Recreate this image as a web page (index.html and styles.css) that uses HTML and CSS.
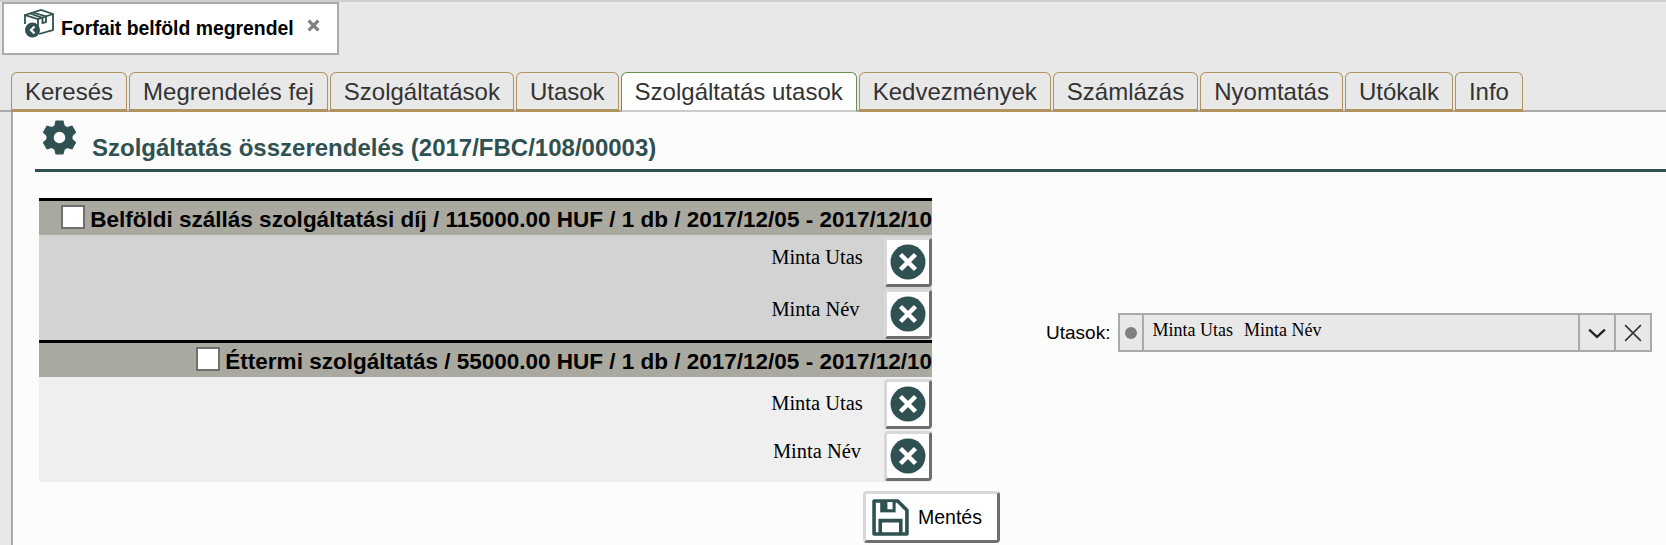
FILE: index.html
```html
<!DOCTYPE html>
<html lang="en">
<head>
  <meta charset="UTF-8">
  <meta name="viewport" content="width=device-width, initial-scale=1.0">
  <title>Forfait belföld megrendel</title>
  <link rel="stylesheet" href="styles.css">
</head>
<body>
  <!-- Window tab -->
  <div class="window-bar">
    <div class="window-tab">
      <svg class="box-icon" viewBox="0 0 30 29" fill="none" stroke="#2f5151" stroke-width="1.8">
        <path d="M1 6 L17 1 L29 5 L14 10 Z"/>
        <path d="M1 6 V15"/>
        <path d="M14 10 V18"/>
        <path d="M29 5 V21 L15 25"/>
        <path d="M9 3.500 L22 7.500 V13 L18.500 14 V9 L6 4.500"/>
        <circle cx="8.500" cy="21" r="7.500" fill="#2f5151" stroke="none"/>
        <path d="M10.500 17.500 L7 21 L10.500 24.500" stroke="#fff" stroke-width="2.200"/>
      </svg>
      <span class="window-title">Forfait belföld megrendel</span>
      <svg class="window-close" viewBox="0 0 12 12" fill="none" stroke="#808080" stroke-width="3"><path d="M1.500 1.500 L10.500 10.500 M10.500 1.500 L1.500 10.500"/></svg>
    </div>
  </div>

  <!-- Tabs -->
  <nav class="tabs">
    <a href="#" class="tab">Keresés</a>
    <a href="#" class="tab">Megrendelés fej</a>
    <a href="#" class="tab">Szolgáltatások</a>
    <a href="#" class="tab">Utasok</a>
    <a href="#" class="tab active">Szolgáltatás utasok</a>
    <a href="#" class="tab">Kedvezmények</a>
    <a href="#" class="tab">Számlázás</a>
    <a href="#" class="tab">Nyomtatás</a>
    <a href="#" class="tab">Utókalk</a>
    <a href="#" class="tab">Info</a>
  </nav>

  <main class="panel">
    <div class="section-head">
      <svg class="gear-icon" viewBox="0 0 24 24" fill="#2f5151">
        <circle cx="12" cy="12" r="6.500" fill="none" stroke="#2f5151" stroke-width="5"/>
        <path d="M8.400 4 L9.300 .3 H14.700 L15.600 4 Z"/>
        <path d="M8.400 4 L9.300 .3 H14.700 L15.600 4 Z" transform="rotate(60 12 12)"/>
        <path d="M8.400 4 L9.300 .3 H14.700 L15.600 4 Z" transform="rotate(120 12 12)"/>
        <path d="M8.400 4 L9.300 .3 H14.700 L15.600 4 Z" transform="rotate(180 12 12)"/>
        <path d="M8.400 4 L9.300 .3 H14.700 L15.600 4 Z" transform="rotate(240 12 12)"/>
        <path d="M8.400 4 L9.300 .3 H14.700 L15.600 4 Z" transform="rotate(300 12 12)"/>
      </svg>
      <h2>Szolgáltatás összerendelés (2017/FBC/108/00003)</h2>
    </div>

    <div class="content">
      <div class="services">
        <div class="service dark">
          <div class="service-head">
            <span class="checkbox"></span>
            <span class="service-title">Belföldi szállás szolgáltatási díj / 115000.00 HUF / 1 db / 2017/12/05 - 2017/12/10</span>
          </div>
          <div class="passenger">
            <span class="name raised">Minta Utas</span>
            <button class="remove-btn"><svg viewBox="0 0 36 36"><circle cx="18" cy="18" r="17.500" fill="#2f5151"/><path d="M10.500 10.500 L25.500 25.500 M25.500 10.500 L10.500 25.500" stroke="#fff" stroke-width="4.500"/></svg></button>
          </div>
          <div class="passenger">
            <span class="name raised shifted">Minta Név</span>
            <button class="remove-btn"><svg viewBox="0 0 36 36"><circle cx="18" cy="18" r="17.500" fill="#2f5151"/><path d="M10.500 10.500 L25.500 25.500 M25.500 10.500 L10.500 25.500" stroke="#fff" stroke-width="4.500"/></svg></button>
          </div>
        </div>
        <div class="service light">
          <div class="service-head">
            <span class="checkbox"></span>
            <span class="service-title">Éttermi szolgáltatás / 55000.00 HUF / 1 db / 2017/12/05 - 2017/12/10</span>
          </div>
          <div class="passenger">
            <span class="name">Minta Utas</span>
            <button class="remove-btn"><svg viewBox="0 0 36 36"><circle cx="18" cy="18" r="17.500" fill="#2f5151"/><path d="M10.500 10.500 L25.500 25.500 M25.500 10.500 L10.500 25.500" stroke="#fff" stroke-width="4.500"/></svg></button>
          </div>
          <div class="passenger">
            <span class="name raised">Minta Név</span>
            <button class="remove-btn"><svg viewBox="0 0 36 36"><circle cx="18" cy="18" r="17.500" fill="#2f5151"/><path d="M10.500 10.500 L25.500 25.500 M25.500 10.500 L10.500 25.500" stroke="#fff" stroke-width="4.500"/></svg></button>
          </div>
        </div>
        <button class="save-btn">
          <svg viewBox="0 0 36 36" fill="none" stroke="#2f5151" stroke-width="3.500">
            <path d="M2 2 H25 L34 11 V34 H2 Z" stroke-linejoin="round"/>
            <path d="M8 2 H23 V13 H8 Z" fill="#2f5151" stroke="none"/>
            <rect x="15" y="3" width="5" height="7" fill="#fff" stroke="none"/>
            <path d="M8 34 V21 H28 V34"/>
          </svg>
          <span>Mentés</span>
        </button>
      </div>

      <div class="passenger-field">
        <label>Utasok:</label>
        <div class="select-box">
          <span class="select-dot"><i></i></span>
          <span class="select-value"><span>Minta Utas</span><span>Minta Név</span></span>
          <span class="select-btn">
            <svg viewBox="0 0 16 16" fill="none" stroke="#222" stroke-width="2"><path d="M1 5 L8 11.500 L15 5"/></svg>
          </span>
          <span class="select-btn">
            <svg viewBox="0 0 16 16" fill="none" stroke="#333" stroke-width="1.400"><path d="M1 1 L15 15 M15 1 L1 15"/></svg>
          </span>
        </div>
      </div>
    </div>
  </main>
</body>
</html>
```

FILE: styles.css
```css
/* General Reset */
* {
  margin: 0;
  padding: 0;
  box-sizing: border-box;
}

body {
  background-color: #e8e8e8;
  border-top: 2px solid #cfcfcf;
  font-family: "Liberation Sans", Arial, sans-serif;
  height: 545px;
  overflow: hidden;
}

/* Window tab */
.window-bar {
  padding-left: 2px;
}

.window-tab {
  display: flex;
  align-items: center;
  width: 337px;
  height: 53px;
  padding-left: 20px;
  background-color: #fff;
  border: 2px solid #aaa;
}

.box-icon {
  width: 30px;
  height: 29px;
  margin-top: -10px;
}

.window-title {
  margin-left: 7px;
  font-size: 19.4px;
  font-weight: bold;
  color: #000;
}

.window-close {
  width: 13px;
  height: 13px;
  margin-left: 13px;
  margin-top: -7px;
}

/* Tabs */
.tabs {
  display: flex;
  gap: 2px;
  height: 40px;
  margin-top: 17px;
  padding-left: 11px;
  border-bottom: 2px solid #aaa;
}

.tab {
  height: 40px;
  padding: 0 13px;
  line-height: 37px;
  font-size: 24px;
  color: #333;
  text-decoration: none;
  background-color: #e8e8e8;
  border: 1px solid #b0935f;
  border-bottom-width: 3px;
  border-radius: 6px 6px 0 0;
}

.tab.active {
  background-color: #fff;
  border-color: #6a8f4f;
  border-bottom: 2px solid #ccc;
}

/* Main panel */
.panel {
  height: 433px;
  margin-left: 11px;
  padding: 0 0 0 22px;
  background-color: #fcfcfc;
  border-left: 2px solid #aaa;
}

.section-head {
  display: flex;
  align-items: flex-end;
  height: 60px;
  padding: 0 0 7px 7px;
  border-bottom: 3px solid #2f5151;
}

.gear-icon {
  width: 35px;
  height: 35px;
  margin-bottom: 7px;
}

.section-head h2 {
  margin-left: 15px;
  font-size: 24px;
  color: #2f5151;
}

.content {
  display: flex;
  align-items: flex-start;
  padding: 26px 0 0 4px;
}

/* Services */
.services {
  width: 961px;
}

.service {
  width: 893px;
  border-top: 3px solid #000;
}

.service.dark {
  background-color: #d3d3d3;
  padding-bottom: 1px;
}

.service.light {
  background-color: #efefef;
  padding-bottom: 1px;
}

.service-head {
  display: flex;
  align-items: center;
  justify-content: flex-end;
  gap: 5px;
  height: 34px;
  font-size: 22.5px;
  font-weight: bold;
  white-space: nowrap;
  color: #000;
  background-color: #aaa9a0;
}

.service-title {
  margin-top: 4px;
}

.checkbox {
  width: 24px;
  height: 24px;
  margin-top: -2px;
  background-color: #fff;
  border: 2px solid #707070;
}

.passenger {
  display: flex;
  align-items: center;
  justify-content: flex-end;
  height: 52px;
  padding-top: 1px;
}

.name {
  width: 114px;
  margin-right: 10px;
  text-align: center;
  font-family: "Liberation Serif", "Times New Roman", serif;
  font-size: 20.5px;
  color: #000;
}

.name.raised {
  margin-bottom: 9px;
}

.name.shifted {
  padding-right: 3px;
}

.remove-btn {
  display: flex;
  align-items: center;
  justify-content: center;
  width: 48px;
  height: 50px;
  background-color: #fff;
  border: 3px solid #d8d8d8;
  border-right-color: #6e6e6e;
  border-bottom-color: #6e6e6e;
  border-radius: 4px;
}

.remove-btn svg {
  width: 36px;
  height: 36px;
}

.save-btn {
  display: flex;
  align-items: center;
  width: 137px;
  height: 52px;
  margin: 9px 0 0 824px;
  padding-left: 6px;
  font-family: "Liberation Sans", Arial, sans-serif;
  font-size: 19.5px;
  color: #000;
  background-color: #fff;
  border: 3px solid #d8d8d8;
  border-right-color: #6e6e6e;
  border-bottom-color: #6e6e6e;
  border-radius: 4px;
}

.save-btn svg {
  width: 37px;
  height: 37px;
  margin-right: 9px;
}

/* Passenger select */
.passenger-field {
  display: flex;
  align-items: center;
  margin: 115px 0 0 46px;
}

.passenger-field label {
  margin-right: 8px;
  font-size: 19px;
  color: #000;
}

.select-box {
  display: flex;
  align-items: stretch;
  width: 534px;
  height: 39px;
  background-color: #e8e8e8;
  border: 2px solid #aaa;
}

.select-dot {
  display: flex;
  align-items: center;
  justify-content: center;
  width: 24px;
  border-right: 2px solid #aaa;
}

.select-dot i {
  width: 12px;
  height: 12px;
  border-radius: 50%;
  background-color: #808080;
}

.select-value {
  flex: 1;
  display: flex;
  gap: 11px;
  padding: 5px 0 0 8px;
  font-family: "Liberation Serif", "Times New Roman", serif;
  font-size: 18px;
  color: #000;
}

.select-btn {
  display: flex;
  align-items: center;
  justify-content: center;
  width: 36px;
  border-left: 2px solid #aaa;
}

.select-btn svg {
  width: 18px;
  height: 18px;
}
```
